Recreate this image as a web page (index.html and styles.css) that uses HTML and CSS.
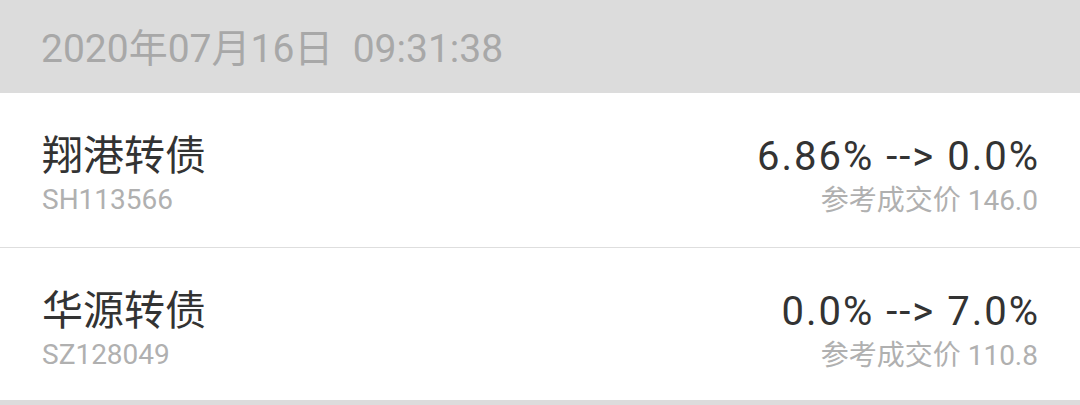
FILE: index.html
```html
<!doctype html>
<html lang="zh-CN">

<head>
	<meta charset="utf-8">
	<title>转债转股溢价</title>
	<meta name="viewport" content="width=device-width, initial-scale=1.0">
	<link rel="stylesheet" href="styles.css">
</head>

<body>
	<header class="stamp">2020年07月16日&nbsp;&nbsp;09:31:38</header>
	<ul class="bonds">
		<li class="bond">
			<div class="bond-left">
				<span class="bond-name">翔港转债</span>
				<span class="bond-code">SH113566</span>
			</div>
			<div class="bond-right">
				<span class="bond-rate">6.86% --&gt; 0.0%</span>
				<span class="bond-price">参考成交价 146.0</span>
			</div>
		</li>
		<li class="bond">
			<div class="bond-left">
				<span class="bond-name">华源转债</span>
				<span class="bond-code">SZ128049</span>
			</div>
			<div class="bond-right">
				<span class="bond-rate">0.0% --&gt; 7.0%</span>
				<span class="bond-price">参考成交价 110.8</span>
			</div>
		</li>
	</ul>
</body>

</html>
```

FILE: styles.css
```css
html
{
	margin: 0;
	padding: 0;
}
body
{
	margin: 0;
	padding: 0;
	background: #dcdcdc;
	font-family: "Roboto", "Noto Sans CJK SC", sans-serif;
}

.stamp
{
	height: 93px;
	padding: 0 41px 4px;
	box-sizing: border-box;
	display: flex;
	align-items: center;
	font-size: 39px;
	color: #a8a8a8;
	background: #dcdcdc;
}

.bonds
{
	list-style: none;
	margin: 0;
	padding: 0;
	background: #ffffff;
}

.bond
{
	height: 153px;
	padding: 37px 42px 0;
	box-sizing: border-box;
	display: flex;
	justify-content: space-between;
	align-items: flex-start;
	border-top: 1px solid #dedede;
}
.bond:first-child
{
	height: 154px;
	border-top: none;
}

.bond-left,
.bond-right
{
	display: flex;
	flex-direction: column;
}
.bond-right
{
	align-items: flex-end;
}

.bond-name
{
	font-size: 41px;
	line-height: 52px;
	color: #333333;
}
.bond-code
{
	font-size: 28px;
	line-height: 36px;
	color: #b0b0b0;
}

.bond-rate
{
	font-size: 40px;
	line-height: 53px;
	letter-spacing: 2px;
	margin-right: -2px;
	color: #333333;
}
.bond-price
{
	font-size: 28px;
	line-height: 36px;
	color: #b0b0b0;
}
```
